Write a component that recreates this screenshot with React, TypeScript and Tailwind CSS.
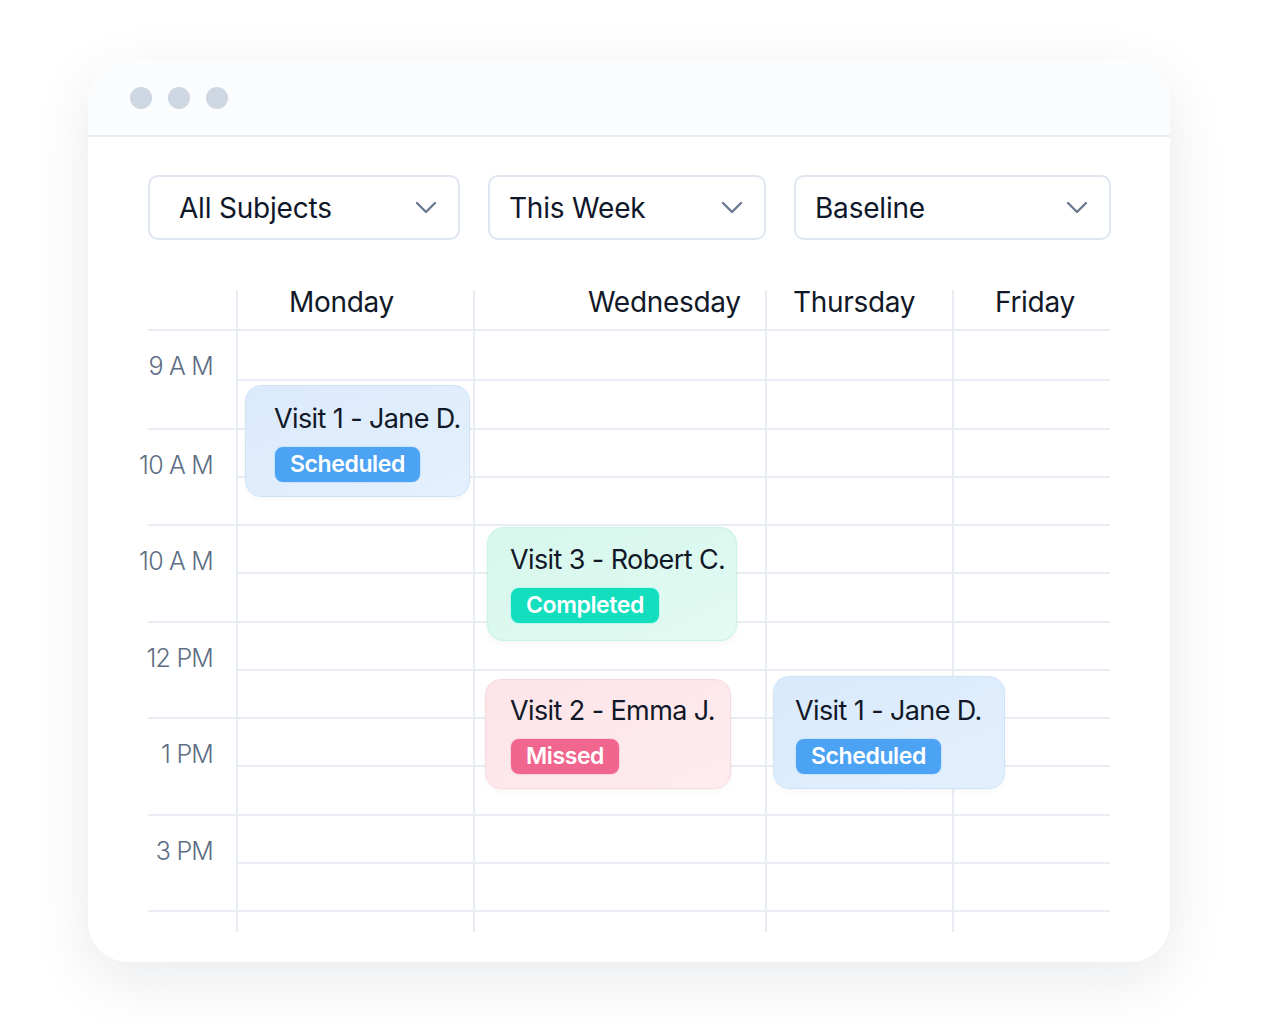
import React from "react";

type Day = {
  name: string;
  width: string;
  pad: string;
};

type Visit = {
  title: string;
  status: "Scheduled" | "Completed" | "Missed";
  box: string;
  inner: string;
};

const days: Day[] = [
  { name: "Monday", width: "w-[237px]", pad: "pl-[51px]" },
  { name: "Wednesday", width: "w-[292px]", pad: "pl-[113px]" },
  { name: "Thursday", width: "w-[187px]", pad: "pl-[26px]" },
  { name: "Friday", width: "w-[158px]", pad: "pl-[41px]" },
];

const hours = ["9 A M", "10 A M", "10 A M", "12 PM", "1 PM", "3 PM"];

const badgeStyles: Record<Visit["status"], string> = {
  Scheduled: "bg-[#4ca3f3]",
  Completed: "bg-[#13dfbf]",
  Missed: "bg-[#f1668f]",
};

const visits: Visit[] = [
  {
    title: "Visit 1 - Jane D.",
    status: "Scheduled",
    box: "left-[97px] top-[54px] w-[225px] h-[112px] bg-gradient-to-br from-[#dbeafc] to-[#e4f0fd] border-[#cfe3f8]",
    inner: "pl-[28px] pt-[17px]",
  },
  {
    title: "Visit 3 - Robert C.",
    status: "Completed",
    box: "left-[339px] top-[196px] w-[250px] h-[114px] bg-gradient-to-br from-[#d6f7ec] to-[#e2faf3] border-[#cbf2e5]",
    inner: "pl-[22px] pt-[16px]",
  },
  {
    title: "Visit 2 - Emma J.",
    status: "Missed",
    box: "left-[337px] top-[348px] w-[246px] h-[110px] bg-gradient-to-br from-[#fde4e8] to-[#feecee] border-[#f8d8dd]",
    inner: "pl-[24px] pt-[15px]",
  },
  {
    title: "Visit 1 - Jane D.",
    status: "Scheduled",
    box: "left-[625px] top-[345px] w-[232px] h-[113px] bg-gradient-to-br from-[#d9eafc] to-[#e3effd] border-[#cfe3f8]",
    inner: "pl-[21px] pt-[18px]",
  },
];

function Chevron() {
  return (
    <svg width="22" height="13" viewBox="0 0 22 13" fill="none">
      <polyline
        points="2,2 11,11 20,2"
        stroke="#6b7a90"
        strokeWidth="2.4"
        strokeLinecap="round"
        strokeLinejoin="round"
      />
    </svg>
  );
}

function Dropdown({ label, width, pad }: { label: string; width: string; pad: string }) {
  return (
    <div
      className={`${width} ${pad} h-[65px] pr-[21px] flex items-center justify-between rounded-[10px] border-2 border-[#dfe6ef] bg-white`}
    >
      <span className="text-[28px] leading-none text-[#0f172a] tracking-[-0.2px]">{label}</span>
      <Chevron />
    </div>
  );
}

function VisitCard({ visit }: { visit: Visit }) {
  return (
    <div className={`absolute rounded-[16px] border ${visit.box} shadow-[0_2px_6px_rgba(15,23,42,0.04)]`}>
      <div className={visit.inner}>
        <div className="text-[27px] leading-[32px] text-[#111827] tracking-[-0.6px] whitespace-nowrap">
          {visit.title}
        </div>
        <div
          className={`mt-[11px] inline-flex h-[37px] items-center rounded-[9px] border border-white/70 px-[15px] text-[23px] font-semibold text-white tracking-[-0.4px] ${badgeStyles[visit.status]}`}
        >
          {visit.status}
        </div>
      </div>
    </div>
  );
}

export default function App() {
  return (
    <div className="min-h-screen bg-white pt-[59px] pl-[88px]" style={{ fontFamily: "Inter, 'Noto Sans', sans-serif" }}>
      <div className="w-[1082px] h-[903px] rounded-[40px] bg-white shadow-[0_18px_60px_rgba(15,23,42,0.09)] overflow-hidden">
        {/* Window bar */}
        <div className="h-[78px] bg-[#fbfcfd] border-b-2 border-[#e8edf3] flex items-center gap-[16px] pl-[42px] pt-[2px]">
          <div className="w-[22px] h-[22px] rounded-full bg-[#cfd7e2]" />
          <div className="w-[22px] h-[22px] rounded-full bg-[#cfd7e2]" />
          <div className="w-[22px] h-[22px] rounded-full bg-[#cfd7e2]" />
        </div>

        <div className="pl-[60px] pt-[38px]">
          {/* Filters */}
          <div className="flex gap-[28px]">
            <Dropdown label="All Subjects" width="w-[312px]" pad="pl-[29px]" />
            <Dropdown label="This Week" width="w-[278px]" pad="pl-[19px]" />
            <Dropdown label="Baseline" width="w-[317px]" pad="pl-[19px]" />
          </div>

          {/* Calendar header */}
          <div className="mt-[48px] flex h-[43px] border-b-2 border-[#e8edf3] w-[962px]">
            <div className="w-[88px]" />
            {days.map((d) => (
              <div key={d.name} className={`${d.width} ${d.pad} border-l-2 border-[#e8edf3] mt-[2px]`}>
                <span className="-mt-[2px] block text-[28px] leading-[28px] text-[#111827] tracking-[-0.3px]">
                  {d.name}
                </span>
              </div>
            ))}
          </div>

          {/* Calendar body */}
          <div className="relative flex w-[962px]">
            <div className="w-[88px] flex flex-col">
              {hours.map((h, i) => (
                <div
                  key={i}
                  className={`h-[96.5px] pr-[23px] pt-[21px] flex justify-end ${
                    i > 0 ? "border-t-2 border-[#e8edf3]" : ""
                  }`}
                >
                  <span className="whitespace-nowrap text-[25px] leading-[28px] font-light text-[#5d6d84] tracking-[-0.8px]">
                    {h}
                  </span>
                </div>
              ))}
              <div className="h-[22px] border-t-2 border-[#e8edf3]" />
            </div>
            {days.map((d) => (
              <div key={d.name} className={`${d.width} flex flex-col border-l-2 border-[#e8edf3]`}>
                {Array.from({ length: 12 }).map((_, i) => (
                  <div
                    key={i}
                    className={`h-[48.25px] ${i > 0 ? "border-t-2 border-[#e8edf3]" : ""}`}
                  />
                ))}
                <div className="h-[22px] border-t-2 border-[#e8edf3]" />
              </div>
            ))}

            {visits.map((v, i) => (
              <VisitCard key={i} visit={v} />
            ))}
          </div>
        </div>
      </div>
    </div>
  );
}
